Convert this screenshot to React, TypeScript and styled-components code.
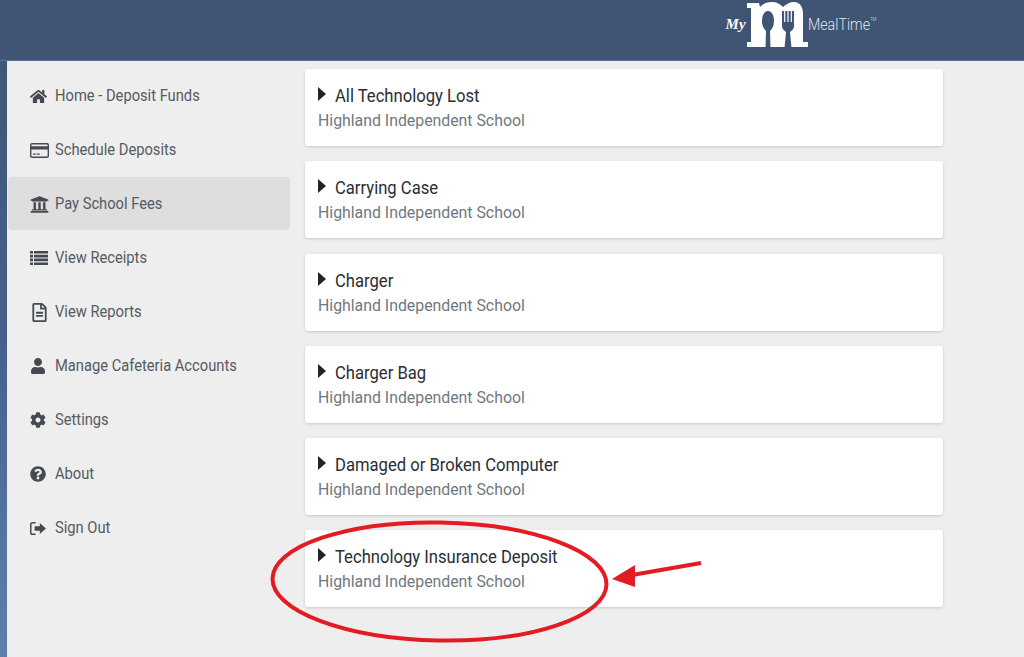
import React from "react";
import styled, { createGlobalStyle } from "styled-components";
import { FaHome, FaUniversity, FaRegFileAlt, FaUser, FaCog, FaQuestionCircle } from "react-icons/fa";

const Global = createGlobalStyle`
  html, body { margin: 0; padding: 0; height: 100%; overflow: hidden; }
  body { font-family: Roboto, "Liberation Sans", sans-serif; }
`;

const Page = styled.div`
  position: relative;
  width: 1024px;
  height: 657px;
  overflow: hidden;
  display: flex;
  flex-direction: column;
  background: linear-gradient(180deg, #3f5573 0%, #44608a 50%, #5f7fa9 100%);
`;

const Header = styled.header`
  height: 60px;
  flex: none;
  background: #3f5573;
  border-bottom: 1px solid #5a7396;
  display: flex;
  justify-content: flex-end;
  align-items: flex-start;
  padding-right: 137px;
`;

const Logo = styled.div`
  display: flex;
  align-items: flex-start;
  color: #fff;
`;

const LogoMy = styled.span`
  font-family: "Liberation Serif", serif;
  font-style: italic;
  font-weight: 700;
  font-size: 15px;
  line-height: 14px;
  margin: 17px 1px 0 0;
`;

const MarkWrap = styled.span`
  display: block;
  margin-top: 2px;
  svg { display: block; }
`;

const LogoName = styled.span`
  font-size: 16.5px;
  font-weight: 300;
  line-height: 18px;
  color: #dfe4ea;
  margin: 16px 0 0 0;
  display: inline-block;
  transform: scaleX(0.86);
  transform-origin: left center;
`;

const LogoTm = styled.sup`
  font-size: 5px;
  line-height: 0;
  vertical-align: 9px;
`;

const Content = styled.div`
  flex: 1;
  margin-left: 7px;
  background: #eeeeee;
  display: flex;
`;

const Sidebar = styled.nav`
  width: 282px;
  margin-left: 1px;
  padding-top: 8px;
  flex: none;
  display: flex;
  flex-direction: column;
`;

const NavItem = styled.a<{ $active?: boolean }>`
  height: 54px;
  flex: none;
  display: flex;
  align-items: center;
  box-sizing: border-box;
  padding-left: 22px;
  color: #555b61;
  background: ${(p) => (p.$active ? "#dedede" : "transparent")};
  clip-path: ${(p) => (p.$active ? "inset(0 0 1px 0 round 4px)" : "none")};
`;

const NavIcon = styled.span`
  width: 25px;
  flex: none;
  display: flex;
  align-items: center;
  color: #444a50;
  svg { display: block; }
`;

const NavLabel = styled.span`
  font-size: 17px;
  line-height: 20px;
  margin-top: -2px;
  white-space: nowrap;
  display: inline-block;
  transform: scaleX(0.865);
  transform-origin: left center;
`;

const Main = styled.main`
  margin-left: 15px;
  padding-top: 8px;
  width: 638px;
  display: flex;
  flex-direction: column;
  gap: 15.25px;
`;

const Card = styled.article`
  height: 77px;
  flex: none;
  box-sizing: border-box;
  padding: 14px 13px 0;
  background: #fff;
  border-radius: 3px;
  box-shadow: 0 1px 3px rgba(0, 0, 0, 0.16);
`;

const TitleRow = styled.div`
  display: flex;
  align-items: flex-start;
  height: 27px;
`;

const Caret = styled.span`
  width: 0;
  height: 0;
  flex: none;
  margin: 4px 9px 0 0;
  border-left: 8px solid #212529;
  border-top: 7px solid transparent;
  border-bottom: 7px solid transparent;
`;

const Title = styled.h3`
  margin: 0;
  font-size: 19px;
  font-weight: 400;
  line-height: 26px;
  color: #2a2e33;
  white-space: nowrap;
  display: inline-block;
  transform: scaleX(0.875);
  transform-origin: left center;
`;

const Subtitle = styled.div`
  font-size: 16px;
  line-height: 22px;
  color: #6f7880;
  white-space: nowrap;
  transform: scaleX(0.99);
  transform-origin: left center;
`;

const Annotation = styled.svg`
  position: absolute;
  inset: 0;
  pointer-events: none;
`;

const CardIcon = () => (
  <svg width="19" height="15" viewBox="0 0 19 15">
    <path fill="currentColor" fillRule="evenodd" d="M2 0h15a2 2 0 0 1 2 2v11a2 2 0 0 1-2 2H2a2 2 0 0 1-2-2V2a2 2 0 0 1 2-2Zm-.6 3.200h16.200V2a.6.6 0 0 0-.6-.6H2a.6.6 0 0 0-.6.6v1.200Zm0 3.400V13a.6.6 0 0 0 .6.6h15a.6.6 0 0 0 .6-.6V6.600H1.400ZM3 10.600h2.600v1.200H3v-1.200Zm3.600 0h3.200v1.200H6.600v-1.200Z" />
  </svg>
);

const ListIcon = () => (
  <svg width="18" height="14" viewBox="0 0 18 14">
    <path fill="currentColor" d="M0 0h3v2.600H0zM4 0h14v2.600H4zM0 3.800h3v2.600H0zM4 3.800h14v2.600H4zM0 7.600h3v2.600H0zM4 7.600h14v2.600H4zM0 11.400h3V14H0zM4 11.400h14V14H4z" />
  </svg>
);

const SignOutIcon = () => (
  <svg width="16" height="13" viewBox="0 0 16 13">
    <path fill="currentColor" d="M5.600 0v1.500H2.600c-.6 0-1.100.5-1.100 1.100v7.800c0 .6.5 1.100 1.100 1.100h3V13H2.600A2.600 2.600 0 0 1 0 10.400V2.600A2.600 2.600 0 0 1 2.600 0h3Z" />
    <path fill="currentColor" d="M9.800 1 16 6.500 9.800 12V8.800H4.600V4.200h5.200V1Z" />
  </svg>
);

const MealtimeMark = () => (
  <svg width="61" height="46" viewBox="0 0 61 46">
    <path
      fill="#fff"
      d="M0 1H12L13 5C16 1.500 20 0 25 0C30 0 33 2 36 5C39 2 43 0 47 0C53 0 56 5 56 12V40H61V45H0V40H4V6H0V1Z"
    />
    <path fill="#3f5573" d="M21 9C25 9 27 14 27 19C27 24 25 27 23 29L23.500 46H18.500L19 29C17 27 15 24 15 19C15 14 17 9 21 9Z" />
    <path
      fill="#3f5573"
      d="M35 9h2.100v11h1.200V9h2.100v11h1.200V9h2.100v11h1.200V9H47v15c0 3-2 4-4 6l1.500 16h-7L39 30c-2-2-4-3-4-6Z"
    />
  </svg>
);

const NAV: { label: string; icon: React.ReactNode; active?: boolean }[] = [
  { label: "Home - Deposit Funds", icon: <FaHome size={17} /> },
  { label: "Schedule Deposits", icon: <CardIcon /> },
  { label: "Pay School Fees", icon: <FaUniversity size={19} />, active: true },
  { label: "View Receipts", icon: <ListIcon /> },
  { label: "View Reports", icon: <FaRegFileAlt size={19} /> },
  { label: "Manage Cafeteria Accounts", icon: <FaUser size={16} /> },
  { label: "Settings", icon: <FaCog size={16} /> },
  { label: "About", icon: <FaQuestionCircle size={16} /> },
  { label: "Sign Out", icon: <SignOutIcon /> },
];

const FEES = [
  "All Technology Lost",
  "Carrying Case",
  "Charger",
  "Charger Bag",
  "Damaged or Broken Computer",
  "Technology Insurance Deposit",
];

export default function App() {
  return (
    <Page>
      <Global />
      <Header>
        <Logo>
          <LogoMy>My</LogoMy>
          <MarkWrap>
            <MealtimeMark />
          </MarkWrap>
          <LogoName>
            MealTime<LogoTm>TM</LogoTm>
          </LogoName>
        </Logo>
      </Header>
      <Content>
        <Sidebar>
          {NAV.map((n) => (
            <NavItem key={n.label} $active={n.active}>
              <NavIcon>{n.icon}</NavIcon>
              <NavLabel>{n.label}</NavLabel>
            </NavItem>
          ))}
        </Sidebar>
        <Main>
          {FEES.map((f) => (
            <Card key={f}>
              <TitleRow>
                <Caret />
                <Title>{f}</Title>
              </TitleRow>
              <Subtitle>Highland Independent School</Subtitle>
            </Card>
          ))}
        </Main>
      </Content>
      <Annotation width="1024" height="657" viewBox="0 0 1024 657">
        <ellipse cx="439.500" cy="581.500" rx="167" ry="59" fill="none" stroke="#e31b23" strokeWidth="4" transform="rotate(1 439.500 581.500)" />
        <path d="M701 563 632 575" stroke="#e31b23" strokeWidth="4" fill="none" />
        <path d="M612 579 635 565 635 587Z" fill="#e31b23" />
      </Annotation>
    </Page>
  );
}
